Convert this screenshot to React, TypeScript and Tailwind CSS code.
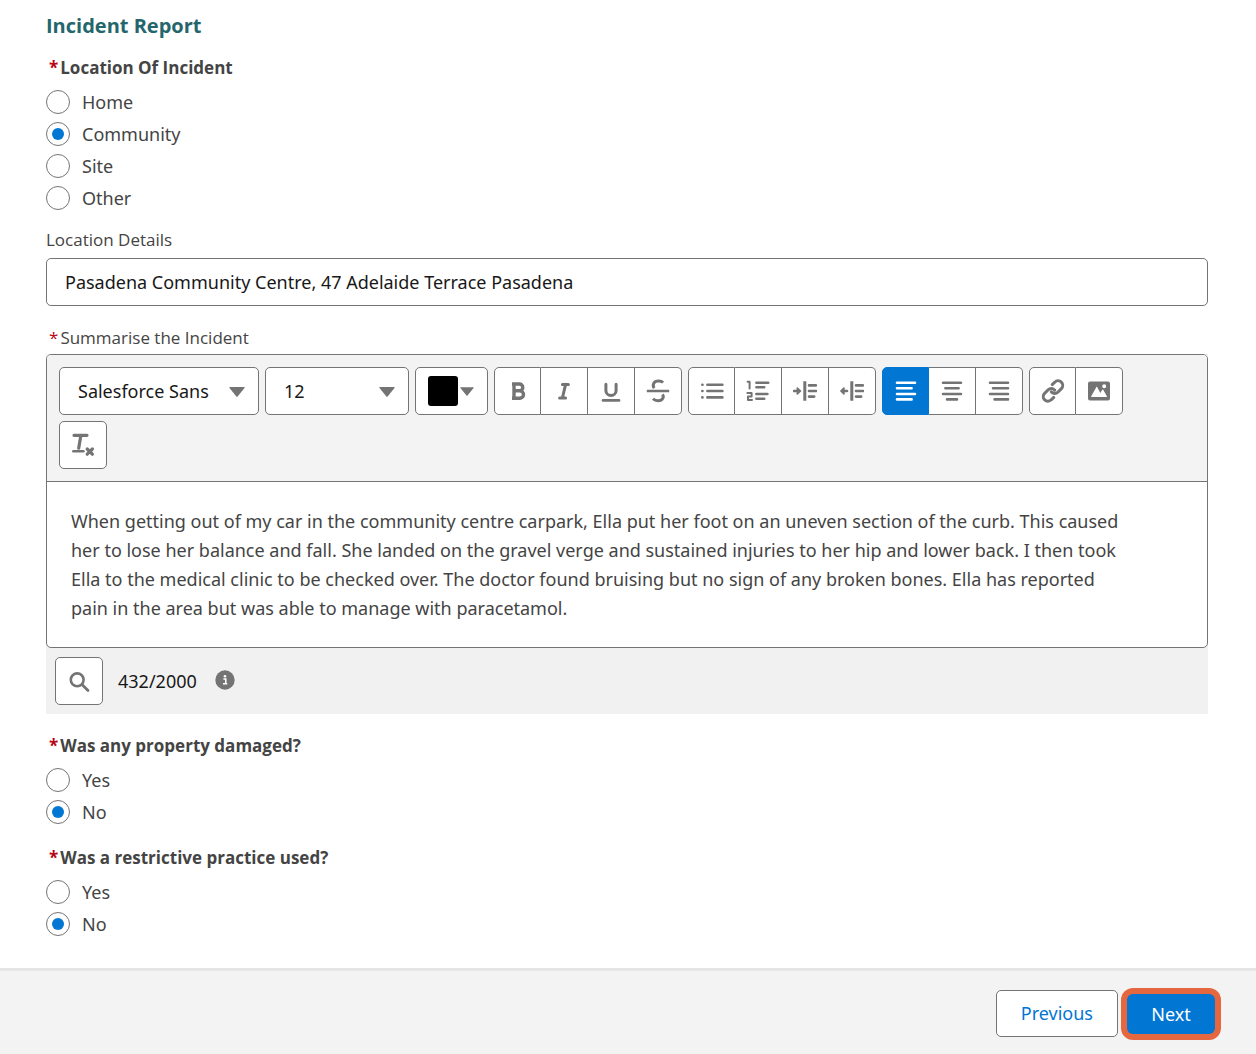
import { useState } from 'react';
import type { ReactNode } from 'react';

function Required() {
  return (
    <span aria-hidden="true" className="ml-[3px] mr-0.5 text-[#ba0517]">
      *
    </span>
  );
}

function RadioGroup({ name, legend, options, initial }: { name: string; legend: string; options: string[]; initial: string }) {
  const [value, setValue] = useState(initial);
  return (
    <fieldset>
      <legend className="mb-1.5 flex font-['Open_Sans',sans-serif] text-[17px] leading-6 font-bold text-[#444]">
        <Required />
        {legend}
      </legend>
      {options.map((option) => (
        <label key={option} className="flex h-8 w-fit items-center gap-3 text-[18px] leading-6 text-[#444]">
          <input
            type="radio"
            name={name}
            value={option}
            checked={value === option}
            onChange={() => setValue(option)}
            className="grid size-6 appearance-none place-items-center rounded-full border border-[#747474] bg-white before:size-3 before:rounded-full before:content-[''] checked:before:bg-[#0176d3]"
          />
          {option}
        </label>
      ))}
    </fieldset>
  );
}

function Caret({ className }: { className: string }) {
  return (
    <svg aria-hidden="true" viewBox="0 0 16 10" className={className} fill="#747474">
      <path d="M1 0h14a.6.6 0 0 1 .5 1L8.6 9.6a.8.8 0 0 1-1.2 0L.5 1A.6.6 0 0 1 1 0Z" />
    </svg>
  );
}

function ToolbarSelect({ label, options, className }: { label: string; options: string[]; className: string }) {
  return (
    <div className="relative">
      <select
        aria-label={label}
        className={`h-12 appearance-none rounded-[5px] border border-[#747474] bg-white pl-[18px] pr-9 text-[18px] text-[#181818] ${className}`}
      >
        {options.map((o) => (
          <option key={o}>{o}</option>
        ))}
      </select>
      <Caret className="pointer-events-none absolute right-3.5 top-5 h-2.5 w-4" />
    </div>
  );
}

function Icon({ children }: { children: ReactNode }) {
  return (
    <svg
      aria-hidden="true"
      viewBox="0 0 24 24"
      className="size-6"
      fill="none"
      stroke="currentColor"
      strokeWidth="2.6"
      strokeLinecap="round"
      strokeLinejoin="round"
    >
      {children}
    </svg>
  );
}

type Tool = { label: string; icon: ReactNode; active?: boolean };

function ToolGroup({ tools }: { tools: Tool[] }) {
  return (
    <div className="flex">
      {tools.map(({ label, icon, active }) => (
        <button
          key={label}
          type="button"
          aria-label={label}
          aria-pressed={!!active}
          className={`flex h-12 w-[47px] items-center justify-center border-y border-r first:rounded-l-[5px] first:border-l last:rounded-r-[5px] ${
            active ? 'border-[#0176d3] bg-[#0176d3] text-white' : 'border-[#747474] bg-white text-[#747474]'
          }`}
        >
          <Icon>{icon}</Icon>
        </button>
      ))}
    </div>
  );
}

const textTools: Tool[] = [
  {
    label: 'Bold',
    icon: <path d="M6 5h7.400a3.300 3.300 0 0 1 0 6.800H8m5.800 0a3.700 3.700 0 0 1 0 7.400H6M8 5v14.200" strokeWidth="3.400" strokeLinecap="butt" />,
  },
  { label: 'Italic', icon: <path d="M10.400 5.400h6M7.600 19h6M13.600 5.400 10.400 19" strokeWidth="3" /> },
  {
    label: 'Underline',
    icon: (
      <>
        <path d="M6.900 5.200v6.200a5.100 5.100 0 0 0 10.200 0V5.200" strokeWidth="3" />
        <path d="M4 21.400h16" />
      </>
    ),
  },
  {
    label: 'Strikethrough',
    icon: (
      <>
        <path d="M.8 12h22.400" strokeLinecap="butt" />
        <path d="M17 3.600C15.600 1.800 9.600 1.200 7.800 4.200 6.900 5.800 7.100 7.600 8.200 9.200M16.400 15.400c1.200 1.400 1 3.200 0 4.600-1.800 2.400-6.600 2.600-9.400-.2" strokeWidth="3" strokeLinecap="butt" />
      </>
    ),
  },
];

const listTools: Tool[] = [
  { label: 'Bulleted list', icon: <path d="M2.300 5.700h.2M2.300 12h.2M2.300 18.400h.2M7.400 5.700h15M7.400 12h15M7.400 18.400h15" /> },
  {
    label: 'Numbered list',
    icon: (
      <>
        <path d="M10.400 3.700h11.800M10.400 8.300h7.800M10.400 15h11M10.400 19.700h7.800" />
        <path d="M1.600 2.800h2v6.600M1.400 14h4.200v3.400H2v3.600h4" strokeWidth="2" />
      </>
    ),
  },
  {
    label: 'Increase indent',
    icon: (
      <>
        <path d="M11.800 2.200v19.600" strokeLinecap="butt" strokeWidth="3" />
        <path d="M16 6.400h7M16 12h7M16 17.600h5.200" />
        <path d="M.8 12h4" />
        <path d="m4.300 9 3.200 3-3.200 3Z" fill="currentColor" strokeWidth="1.600" />
      </>
    ),
  },
  {
    label: 'Decrease indent',
    icon: (
      <>
        <path d="M11.800 2.200v19.600" strokeLinecap="butt" strokeWidth="3" />
        <path d="M16 6.400h7M16 12h7M16 17.600h5.200" />
        <path d="M4 12h3" />
        <path d="M3.900 9 .9 12l3 3Z" fill="currentColor" strokeWidth="1.600" />
      </>
    ),
  },
];

const alignTools: Tool[] = [
  { label: 'Align left', active: true, icon: <path d="M3 3.800h18M3 9.200h14.600M3 15h18M3 20.400h14.600" /> },
  { label: 'Align center', icon: <path d="M3 3.800h18M5.400 9.200h13.200M3 15h18M7 20.400h10" /> },
  { label: 'Align right', icon: <path d="M3 3.800h18M6 9.200h15M3 15h18M7.600 20.400H21" /> },
];

const insertTools: Tool[] = [
  {
    label: 'Link',
    icon: (
      <path
        d="m11.200 5.600 2.600-2.400a4.500 4.500 0 0 1 6.600 6.400l-3.600 3.600a4.500 4.500 0 0 1-6.600-.4M12.800 18.400l-2.600 2.400a4.500 4.500 0 0 1-6.600-6.400l3.600-3.600a4.500 4.500 0 0 1 6.600.4"
        strokeWidth="3"
      />
    ),
  },
  {
    label: 'Image',
    icon: (
      <path
        stroke="none"
        fill="currentColor"
        fillRule="evenodd"
        d="M3 2.600h18a2 2 0 0 1 2 2v14.800a2 2 0 0 1-2 2H3a2 2 0 0 1-2-2V4.600a2 2 0 0 1 2-2ZM4.600 18h14.800c.5 0 .7-.4.500-.8l-3.700-6.400c-.2-.4-.7-.4-.9 0l-2 3.200-3-5.800c-.2-.5-.8-.5-1 0l-5.100 9c-.2.4 0 .8.400.8ZM17.200 5.200a2 2 0 1 0 0 4 2 2 0 0 0 0-4Z"
      />
    ),
  },
];

const summary =
  'When getting out of my car in the community centre carpark, Ella put her foot on an uneven section of the curb. This caused her to lose her balance and fall. She landed on the gravel verge and sustained injuries to her hip and lower back. I then took Ella to the medical clinic to be checked over. The doctor found bruising but no sign of any broken bones. Ella has reported pain in the area but was able to manage with paracetamol.';

export default function App() {
  return (
    <form
      onSubmit={(e) => e.preventDefault()}
      className="flex min-h-screen flex-col bg-white font-['Noto_Sans','Open_Sans',sans-serif]"
    >
      <main className="px-[46px] pt-3 pr-12 pb-7">
        <h1 className="mb-4 font-['Open_Sans',sans-serif] text-[20px] leading-7 font-bold text-[#24666b]">Incident Report</h1>

        <RadioGroup name="location" legend="Location Of Incident" options={['Home', 'Community', 'Site', 'Other']} initial="Community" />

        <label htmlFor="details" className="mt-3.5 mb-1.5 block font-['Open_Sans',sans-serif] text-[17px] leading-6 text-[#444]">
          Location Details
        </label>
        <input
          id="details"
          type="text"
          defaultValue="Pasadena Community Centre, 47 Adelaide Terrace Pasadena"
          className="h-12 w-full rounded-[5px] border border-[#747474] bg-white px-[18px] text-[18px] text-[#181818]"
        />

        <label htmlFor="summary" className="mt-5 mb-1 flex font-['Open_Sans',sans-serif] text-[17px] leading-6 text-[#444]">
          <Required />
          Summarise the Incident
        </label>
        <div className="bg-[#f1f1f1]">
          <div className="overflow-hidden rounded-[5px] border border-[#747474] bg-white">
            <div className="flex flex-wrap gap-1.5 border-b border-[#747474] bg-[#f3f3f3] p-3 pr-8">
              <ToolbarSelect label="Font" options={['Salesforce Sans', 'Arial', 'Courier']} className="w-[200px]" />
              <ToolbarSelect label="Font size" options={['12', '14', '16']} className="w-36" />
              <button
                type="button"
                aria-label="Text colour"
                className="flex h-12 w-[73px] items-center gap-0.5 rounded-[5px] border border-[#747474] bg-white pl-3"
              >
                <span className="size-[30px] rounded-[3px] bg-black" />
                <Caret className="h-[9px] w-3.5" />
              </button>
              <ToolGroup tools={textTools} />
              <ToolGroup tools={listTools} />
              <ToolGroup tools={alignTools} />
              <ToolGroup tools={insertTools} />
              <button
                type="button"
                aria-label="Remove formatting"
                className="flex size-12 items-center justify-center rounded-[5px] border border-[#747474] bg-white text-[#747474]"
              >
                <Icon>
                  <path d="M3 2.300h13M9.900 2.300 7.700 15.200" strokeWidth="3.200" />
                  <path d="M2.400 18.300h10" />
                  <path d="m16.200 16 5.200 5.200m0-5.200-5.200 5.200" strokeWidth="3.200" />
                </Icon>
              </button>
            </div>
            <textarea
              id="summary"
              rows={4}
              defaultValue={summary}
              className="block field-sizing-content w-full resize-none pt-[25px] pr-18 pb-6 pl-6 text-[18px] leading-[29px] text-[#444] outline-none"
            />
          </div>
          <div className="flex items-center p-[9px]">
            <button
              type="button"
              aria-label="Search"
              className="flex size-12 items-center justify-center rounded-[5px] border border-[#747474] bg-white text-[#747474]"
            >
              <Icon>
                <circle cx="10.200" cy="10.800" r="6.400" />
                <path d="m15.200 15.800 5.800 5.800" strokeWidth="2.800" />
              </Icon>
            </button>
            <span className="ml-[15px] text-[18px] leading-6 text-[#181818]">432/2000</span>
            <svg role="img" aria-label="Information" viewBox="0 0 20 20" className="mb-0.5 ml-[18px] size-5">
              <circle cx="10" cy="10" r="9.700" fill="#747474" />
              <circle cx="10" cy="6.200" r="1.300" fill="#fff" />
              <path d="M8.400 9h2.400v4.300M8 13.700h4.200" fill="none" stroke="#fff" strokeWidth="1.500" />
            </svg>
          </div>
        </div>

        <div className="mt-5">
          <RadioGroup name="damage" legend="Was any property damaged?" options={['Yes', 'No']} initial="No" />
        </div>
        <div className="mt-[18px]">
          <RadioGroup name="restrictive" legend="Was a restrictive practice used?" options={['Yes', 'No']} initial="No" />
        </div>
      </main>

      <footer className="flex flex-1 items-start justify-end gap-[9px] border-t-[3px] border-[#e5e5e5] bg-[#f3f3f3] pt-[19px] pr-[41px] text-[18px]">
        <button type="button" className="h-[47px] rounded-[5px] border border-[#747474] bg-white px-6 text-[#0176d3]">
          Previous
        </button>
        <button type="submit" className="mt-1 h-10 min-w-[88px] rounded-md bg-[#0176d3] px-5 text-white ring-6 ring-[#e5673f]">
          Next
        </button>
      </footer>
    </form>
  );
}
